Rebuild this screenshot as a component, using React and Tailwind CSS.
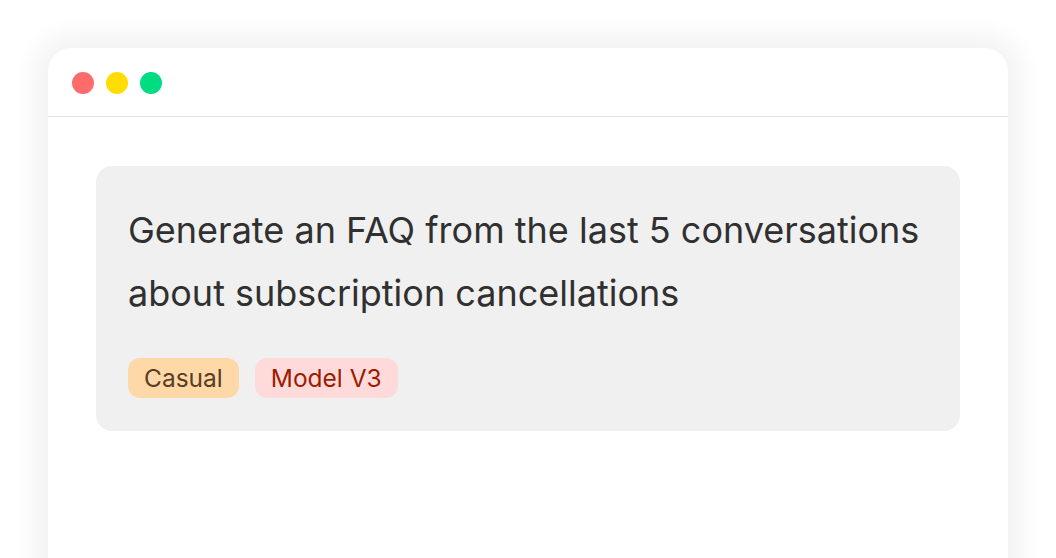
export default function App() {
  return (
    <div className="w-[1056px] h-[558px] overflow-hidden bg-white px-12 pt-12" style={{ fontFamily: "Inter, 'Noto Sans', sans-serif" }}>
      <div className="h-[600px] rounded-t-[24px] bg-white shadow-[0_0_24px_14px_rgba(0,0,0,0.05)]">
        <div className="h-[69px] flex items-center gap-3 pl-6 pt-[1px] border-b border-[#e4e4e4]">
          <div className="w-[22px] h-[22px] rounded-full bg-[#ff6b6b]" />
          <div className="w-[22px] h-[22px] rounded-full bg-[#ffdd00]" />
          <div className="w-[22px] h-[22px] rounded-full bg-[#00dd80]" />
        </div>
        <div className="px-12 pt-[49px]">
          <div className="rounded-[16px] bg-[#f0f0f0] px-8 pt-[33px] pb-[33px]">
            <p className="text-[36px] leading-[63px] text-[#303030]">
              Generate an FAQ from the last 5 conversations about subscription cancellations
            </p>
            <div className="flex gap-4 mt-[33px]">
              <span className="h-10 px-4 flex items-center rounded-[12px] bg-[#ffd8a8] text-[#5a3d22] text-[24.5px]">Casual</span>
              <span className="h-10 px-4 flex items-center rounded-[12px] bg-[#ffdada] text-[#9c1c00] text-[24.5px]">Model V3</span>
            </div>
          </div>
        </div>
      </div>
    </div>
  );
}
